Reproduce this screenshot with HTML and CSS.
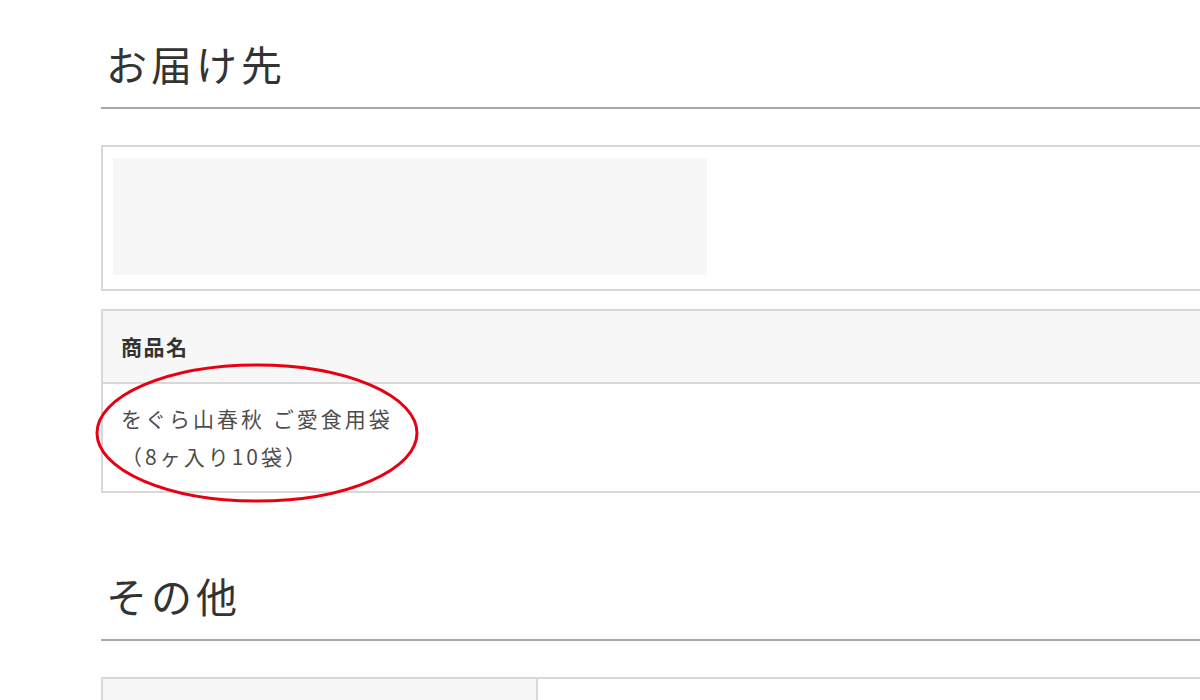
FILE: index.html
```html
<!DOCTYPE html>
<html lang="ja">
<head>
    <meta charset="UTF-8">
    <meta name="viewport" content="width=device-width, initial-scale=1.0">
    <title>お届け先</title>
    <link rel="stylesheet" href="styles.css">
</head>
<body>
    <div class="page">
        <h2 class="section-title">お届け先</h2>

        <div class="address-box">
            <div class="address-mask"></div>
        </div>

        <div class="item-table">
            <div class="item-head">商品名</div>
            <div class="item-body">
                をぐら山春秋 ご愛食用袋<br>（8ヶ入り10袋）
                <svg class="mark" width="330" height="144" viewBox="0 0 330 144">
                    <ellipse cx="165" cy="72" rx="160" ry="68" fill="none" stroke="#e60012" stroke-width="3"/>
                </svg>
            </div>
        </div>

        <h2 class="section-title second">その他</h2>

        <div class="other-table">
            <div class="other-row">
                <div class="other-label">お届け希望日</div>
                <div class="other-value">指定なし</div>
            </div>
        </div>
    </div>
</body>
</html>
```

FILE: styles.css
```css
html, body {
    margin: 0;
    height: 100%;
    overflow: hidden;
}
body {
    font-family: "Noto Sans CJK JP", "Noto Sans", sans-serif;
    background-color: #fff;
    color: #333;
}
.page {
    padding-left: 101px;
    width: 1180px;
}
.section-title {
    margin: 39px 0 0;
    padding-bottom: 20px;
    font-size: 41px;
    line-height: 48px;
    font-weight: normal;
    letter-spacing: 4px;
    text-indent: 5px;
    color: #333;
    border-bottom: 2px solid #a8a8a8;
}
.section-title.second {
    margin-top: 78px;
}
.address-box {
    margin-top: 36px;
    padding: 11px 12px 14px 10px;
    border: 2px solid #d8d8d8;
}
.address-mask {
    width: 594px;
    height: 117px;
    background-color: #f7f7f7;
}
.item-table {
    margin-top: 18px;
    border: 2px solid #d8d8d8;
}
.item-head {
    padding: 20px 18px 21px;
    font-size: 21px;
    line-height: 30px;
    font-weight: bold;
    letter-spacing: 1.5px;
    background-color: #f7f7f7;
    border-bottom: 2px solid #d8d8d8;
}
.item-body {
    position: relative;
    padding: 15px 18px 16px;
    font-size: 21px;
    line-height: 38px;
    letter-spacing: 3px;
    color: #4d4d4d;
}
.mark {
    position: absolute;
    left: -11px;
    top: -23px;
}
.other-table {
    margin-top: 36px;
    border: 2px solid #d8d8d8;
}
.other-row {
    display: flex;
}
.other-label {
    width: 401px;
    padding: 16px 16px;
    font-size: 21px;
    font-weight: bold;
    line-height: 30px;
    background-color: #f7f7f7;
    border-right: 2px solid #d8d8d8;
}
.other-value {
    padding: 16px 20px;
    font-size: 21px;
    line-height: 30px;
    color: #555;
}
```
